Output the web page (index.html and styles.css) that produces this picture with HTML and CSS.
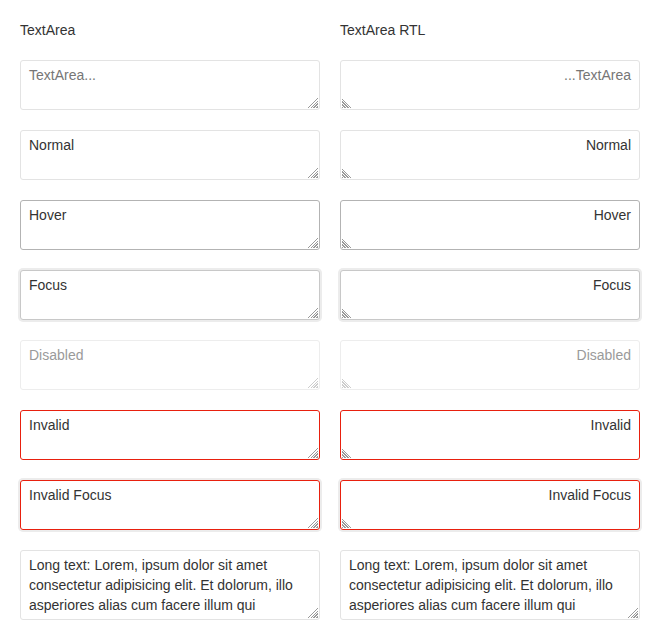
FILE: index.html
```html
<!DOCTYPE html>
<html>
<head>
<meta charset="utf-8">
<link rel="stylesheet" href="styles.css">
</head>
<body>
<div class="grid">
  <div class="col">
    <div class="title">TextArea</div>
    <textarea class="ta" placeholder="TextArea..."></textarea>
    <textarea class="ta">Normal</textarea>
    <textarea class="ta hover">Hover</textarea>
    <textarea class="ta focus">Focus</textarea>
    <textarea class="ta" disabled>Disabled</textarea>
    <textarea class="ta invalid">Invalid</textarea>
    <textarea class="ta invalid focus">Invalid Focus</textarea>
    <textarea class="ta long">Long text: Lorem, ipsum dolor sit amet consectetur adipisicing elit. Et dolorum, illo asperiores alias cum facere illum qui</textarea>
  </div>
  <div class="col">
    <div class="title">TextArea RTL</div>
    <textarea class="ta" dir="rtl" placeholder="TextArea..."></textarea>
    <textarea class="ta" dir="rtl">Normal</textarea>
    <textarea class="ta hover" dir="rtl">Hover</textarea>
    <textarea class="ta focus" dir="rtl">Focus</textarea>
    <textarea class="ta" dir="rtl" disabled>Disabled</textarea>
    <textarea class="ta invalid" dir="rtl">Invalid</textarea>
    <textarea class="ta invalid focus" dir="rtl">Invalid Focus</textarea>
    <textarea class="ta long">Long text: Lorem, ipsum dolor sit amet consectetur adipisicing elit. Et dolorum, illo asperiores alias cum facere illum qui</textarea>
  </div>
</div>
</body>
</html>
```
FILE: styles.css
```css
html, body {
  margin: 0;
  background: #fff;
}
body {
  font-family: "Liberation Sans", Arial, sans-serif;
  font-size: 14px;
  color: #333;
  padding: 20px;
}
.grid {
  display: grid;
  grid-template-columns: 300px 300px;
  column-gap: 20px;
}
.col {
  display: flex;
  flex-direction: column;
  gap: 20px;
}
.title {
  line-height: 20px;
  color: #333;
}
.ta {
  box-sizing: border-box;
  display: block;
  width: 300px;
  height: 50px;
  margin: 0;
  padding: 4px 8px;
  font-family: inherit;
  font-size: 14px;
  line-height: 20px;
  color: #333;
  background: #fff;
  border: 1px solid #e3e3e3;
  border-radius: 3px;
  outline: none;
  resize: vertical;
  overflow: hidden;
}
.ta::-webkit-resizer {
  background-color: transparent;
  background-image:
    linear-gradient(to bottom right, #fff 50%, transparent 50%),
    repeating-linear-gradient(135deg, #9a9a9a 0 1px, #fff 1px 2px);
  background-size: 11px 11px;
  background-position: right 1px bottom 1px;
  background-repeat: no-repeat;
}
.ta[dir="rtl"]::-webkit-resizer {
  background-image:
    linear-gradient(to bottom left, #fff 50%, transparent 50%),
    repeating-linear-gradient(45deg, #9a9a9a 0 1px, #fff 1px 2px);
  background-position: left 1px bottom 1px;
}
.ta:disabled::-webkit-resizer {
  background-image:
    linear-gradient(to bottom right, #fff 50%, transparent 50%),
    repeating-linear-gradient(135deg, #cdcdcd 0 1px, #fff 1px 2px);
}
.ta[dir="rtl"]:disabled::-webkit-resizer {
  background-image:
    linear-gradient(to bottom left, #fff 50%, transparent 50%),
    repeating-linear-gradient(45deg, #cdcdcd 0 1px, #fff 1px 2px);
}
.ta::placeholder {
  color: #767676;
  opacity: 1;
}
.ta.hover {
  border-color: #b3b3b3;
}
.ta.focus {
  border-color: #c8c8c8;
  box-shadow: 0 0 0 2px #ececec;
}
.ta:disabled {
  color: #9a9a9a;
  border-color: #ededed;
  background: #fff;
}
.ta.invalid {
  border-color: #e8200e;
}
.ta.long {
  height: 70px;
}
```
